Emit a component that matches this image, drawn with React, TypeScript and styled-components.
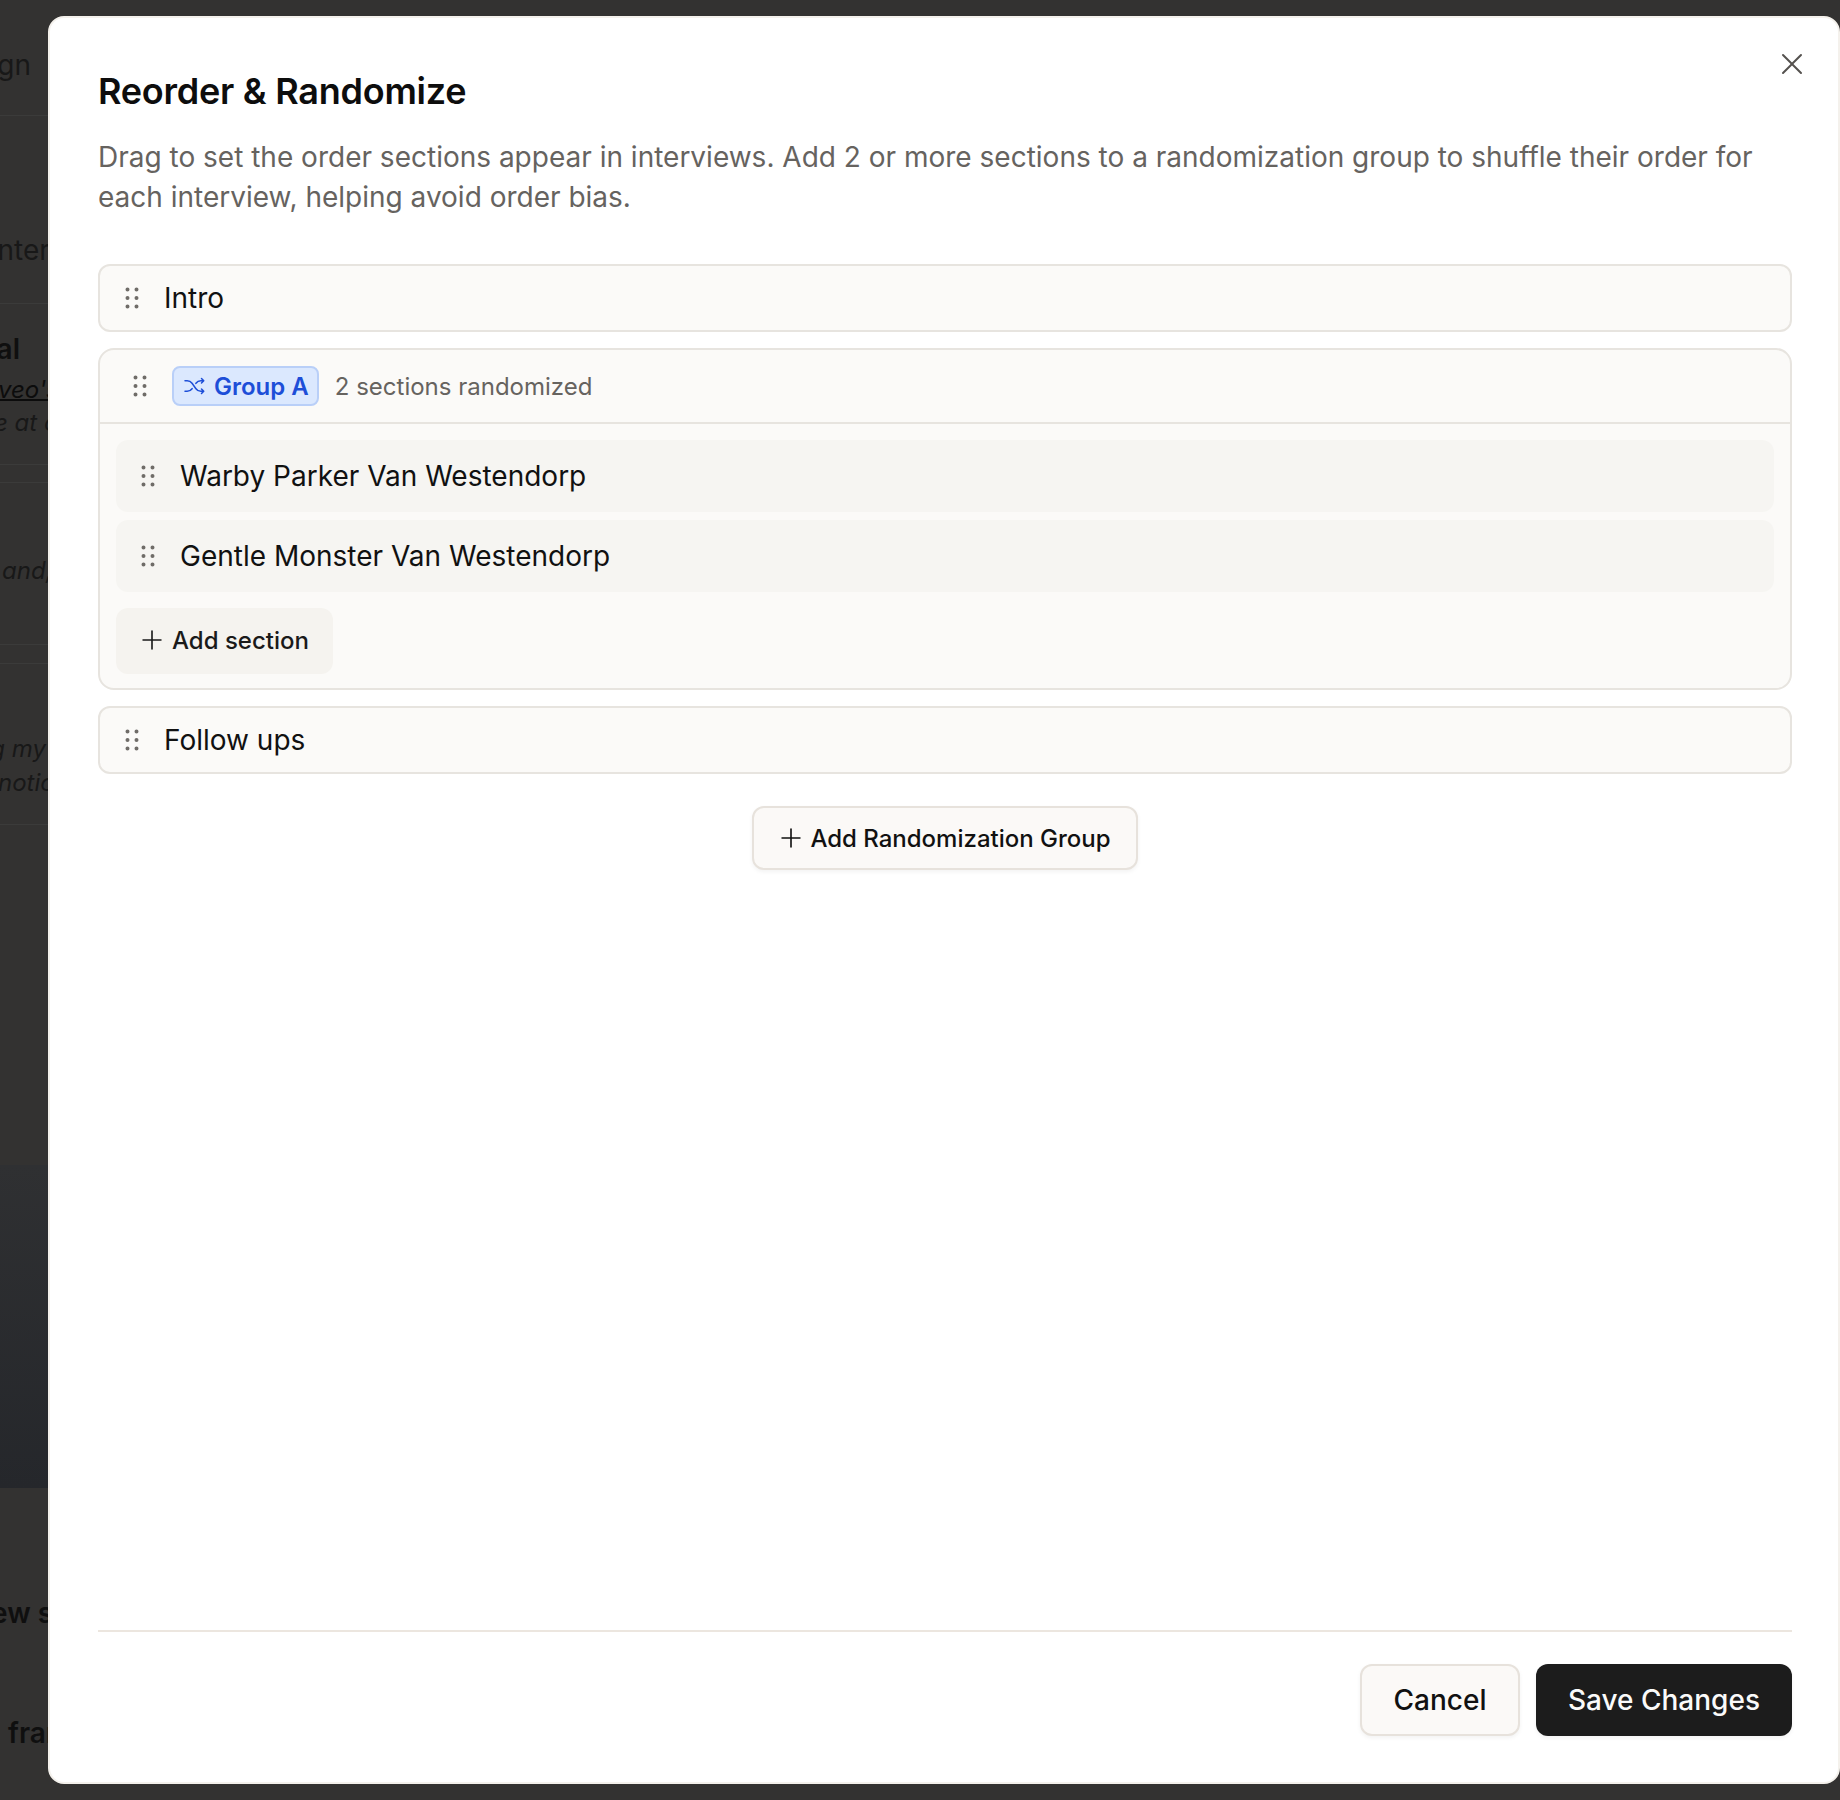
import styled, { createGlobalStyle } from "styled-components";
import { PiDotsSixVerticalBold, PiPlus, PiShuffle, PiX } from "react-icons/pi";

const GlobalStyle = createGlobalStyle`
  * { box-sizing: border-box; }
  body {
    margin: 0;
    font-family: Inter, "Noto Sans", sans-serif;
    background: #333231;
  }
`;

const Page = styled.div`
  width: 1840px;
  height: 1800px;
  position: relative;
  overflow: hidden;
  background: #333231;
`;

/* the page behind the dialog, only a 48px strip of it shows */
const BehindColumn = styled.div`
  width: 48px;
  height: 100%;
  display: flex;
  flex-direction: column;
  overflow: hidden;
  white-space: nowrap;
`;

const BehindBlock = styled.div<{ $height: number; $line?: boolean; $dark?: boolean }>`
  height: ${(p) => p.$height}px;
  flex: none;
  border-bottom: ${(p) => (p.$line ? "1px solid #3b3b3a" : "none")};
  background: ${(p) => (p.$dark ? "linear-gradient(#2f3032, #25272b)" : "transparent")};
`;

const BehindText = styled.div<{
  $top: number;
  $size?: number;
  $bold?: boolean;
  $italic?: boolean;
  $under?: boolean;
  $shift?: number;
  $end?: number;
}>`
  display: flex;
  justify-content: ${(p) => (p.$end ? "flex-end" : "flex-start")};
  width: ${(p) => (p.$end ? `${p.$end}px` : "auto")};
  padding-top: ${(p) => p.$top}px;
  margin-left: ${(p) => p.$shift ?? 0}px;
  font-size: ${(p) => p.$size ?? 24}px;
  line-height: 32px;
  font-weight: ${(p) => (p.$bold ? 600 : 400)};
  font-style: ${(p) => (p.$italic ? "italic" : "normal")};
  color: ${(p) => (p.$bold ? "#0f0f0f" : p.$under ? "#0c0c0c" : "#181818")};
  text-decoration: ${(p) => (p.$under ? "underline 2px" : "none")};
`;

const Dialog = styled.div`
  position: absolute;
  left: 48px;
  top: 16px;
  width: 1792px;
  height: 1768px;
  background: #fff;
  border: 2px solid #f4f1ec;
  border-radius: 16px;
  padding: 49px 46px 46px 48px;
  display: flex;
  flex-direction: column;
`;

const CloseButton = styled.button`
  position: absolute;
  top: 30px;
  right: 30px;
  width: 32px;
  height: 32px;
  padding: 0;
  border: none;
  background: none;
  color: #55524f;
  display: flex;
  align-items: center;
  justify-content: center;
`;

const Title = styled.h2`
  margin: 0;
  font-size: 36px;
  line-height: 48px;
  font-weight: 600;
  letter-spacing: -0.25px;
  color: #0d0d0d;
`;

const Description = styled.p`
  margin: 22px 0 0;
  font-size: 28px;
  line-height: 40px;
  color: #66635f;
`;

const SectionList = styled.div`
  margin-top: 47px;
  display: flex;
  flex-direction: column;
  gap: 16px;
`;

const SectionRow = styled.div`
  height: 68px;
  display: flex;
  align-items: center;
  gap: 16px;
  padding: 0 16px;
  border: 2px solid #e7e4df;
  border-radius: 12px;
  background: #fbfaf8;
`;

const SectionName = styled.span`
  font-size: 28px;
  color: #111;
`;

const Grip = styled(PiDotsSixVerticalBold)`
  flex: none;
  color: #6f6c68;
`;

const GroupCard = styled.div`
  border: 2px solid #e7e4df;
  border-radius: 16px;
  background: #fbfaf8;
`;

const GroupHeader = styled.div`
  height: 74px;
  display: flex;
  align-items: center;
  gap: 16px;
  padding: 0 24px;
  border-bottom: 2px solid #e7e4df;
`;

const GroupBadge = styled.span`
  height: 40px;
  display: inline-flex;
  align-items: center;
  gap: 8px;
  padding: 0 8px;
  background: #dbe8fe;
  border: 2px solid #b9cff8;
  border-radius: 8px;
  font-size: 24px;
  font-weight: 600;
  color: #1d4ed8;
`;

const GroupNote = styled.span`
  font-size: 24px;
  color: #66635f;
`;

const GroupBody = styled.div`
  padding: 16px 16px 14px;
  display: flex;
  flex-direction: column;
  gap: 8px;
`;

const GroupItem = styled.div`
  height: 72px;
  display: flex;
  align-items: center;
  gap: 16px;
  padding: 0 16px;
  border-radius: 12px;
  background: #f6f5f2;
`;

const AddSection = styled.button`
  align-self: flex-start;
  margin-top: 8px;
  height: 66px;
  display: inline-flex;
  align-items: center;
  gap: 7px;
  padding: 0 24px 2px 23px;
  border: none;
  border-radius: 12px;
  background: #f5f3ef;
  font-family: inherit;
  font-size: 24px;
  font-weight: 500;
  color: #1a1a1a;
`;

const CenterRow = styled.div`
  margin-top: 32px;
  display: flex;
  justify-content: center;
`;

const OutlineButton = styled.button`
  height: 64px;
  display: inline-flex;
  align-items: center;
  gap: 6px;
  padding: 0 25px 0 24px;
  border: 2px solid #e7e2dc;
  border-radius: 12px;
  background: #fbf9f7;
  box-shadow: 0 2px 4px rgba(0, 0, 0, 0.05);
  font-family: inherit;
  font-size: 24px;
  font-weight: 500;
  color: #111;
`;

const Footer = styled.div`
  margin-top: auto;
  padding-top: 32px;
  border-top: 2px solid #ece6df;
  display: flex;
  justify-content: flex-end;
  gap: 16px;
`;

const FooterButton = styled.button<{ $primary?: boolean }>`
  height: 72px;
  padding: 0 ${(p) => (p.$primary ? 32 : 31.5)}px;
  border: ${(p) => (p.$primary ? "none" : "2px solid #e7e2dc")};
  border-radius: 12px;
  background: ${(p) => (p.$primary ? "#1c1c1c" : "#fbf9f7")};
  box-shadow: 0 2px 4px rgba(0, 0, 0, 0.05);
  font-family: inherit;
  font-size: 28px;
  font-weight: 500;
  color: ${(p) => (p.$primary ? "#fafafa" : "#111")};
`;

export default function App() {
  return (
    <>
      <GlobalStyle />
      <Page>
        <BehindColumn>
          <BehindBlock $height={116} $line>
            <BehindText $top={49} $size={28} $end={31}>Design</BehindText>
          </BehindBlock>
          <BehindBlock $height={188} $line>
            <BehindText $top={118} $size={28} $shift={-10}>Interview</BehindText>
          </BehindBlock>
          <BehindBlock $height={161} $line>
            <BehindText $top={29} $size={28} $bold $end={20}>Pivotal</BehindText>
            <BehindText $top={9} $italic $under $shift={-2}>veo's view</BehindText>
            <BehindText $top={1} $italic $shift={-6}>e at cost</BehindText>
          </BehindBlock>
          <BehindBlock $height={18} $line />
          <BehindBlock $height={162} $line>
            <BehindText $top={72} $italic $shift={2}>and, more</BehindText>
          </BehindBlock>
          <BehindBlock $height={19} $line />
          <BehindBlock $height={161} $line>
            <BehindText $top={69} $italic $end={46}>looking my</BehindText>
            <BehindText $top={2} $italic $shift={-2}>notice</BehindText>
          </BehindBlock>
          <BehindBlock $height={340} />
          <BehindBlock $height={323} $dark />
          <BehindBlock $height={312}>
            <BehindText $top={109} $size={28} $bold $shift={-9}>ew story</BehindText>
            <BehindText $top={88} $size={28} $bold $shift={8}>framing</BehindText>
          </BehindBlock>
        </BehindColumn>

        <Dialog>
          <CloseButton><PiX size={32} /></CloseButton>
          <Title>Reorder &amp; Randomize</Title>
          <Description>
            Drag to set the order sections appear in interviews. Add 2 or more sections to a randomization group to shuffle their order for each interview, helping avoid order bias.
          </Description>

          <SectionList>
            <SectionRow>
              <Grip size={32} />
              <SectionName>Intro</SectionName>
            </SectionRow>

            <GroupCard>
              <GroupHeader>
                <Grip size={32} />
                <GroupBadge><PiShuffle size={24} />Group A</GroupBadge>
                <GroupNote>2 sections randomized</GroupNote>
              </GroupHeader>
              <GroupBody>
                <GroupItem>
                  <Grip size={32} />
                  <SectionName>Warby Parker Van Westendorp</SectionName>
                </GroupItem>
                <GroupItem>
                  <Grip size={32} />
                  <SectionName>Gentle Monster Van Westendorp</SectionName>
                </GroupItem>
                <AddSection><PiPlus size={26} />Add section</AddSection>
              </GroupBody>
            </GroupCard>

            <SectionRow>
              <Grip size={32} />
              <SectionName>Follow ups</SectionName>
            </SectionRow>
          </SectionList>

          <CenterRow>
            <OutlineButton><PiPlus size={26} />Add Randomization Group</OutlineButton>
          </CenterRow>

          <Footer>
            <FooterButton>Cancel</FooterButton>
            <FooterButton $primary>Save Changes</FooterButton>
          </Footer>
        </Dialog>
      </Page>
    </>
  );
}
